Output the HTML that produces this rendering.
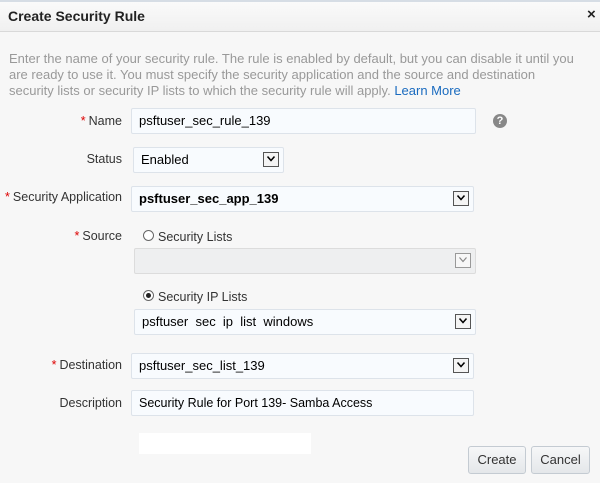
<!DOCTYPE html>
<html><head><style>
body{margin:0;width:600px;height:483px;background:#f7f7f7;font-family:"Liberation Sans",Arial,sans-serif;position:relative;overflow:hidden;color:#333}
.a{position:absolute}
.hdr{left:0;top:0;width:600px;height:32px;background:linear-gradient(#fafafa,#f0f0f0);border-top:2px solid #d6dde5;border-bottom:1px solid #d9d9d9;box-sizing:border-box}
.lbl{font-size:12.5px;color:#333;text-align:right;width:200px}
.req{color:#d00;margin-right:3px}
.in{background:#f8fbfe;border:1px solid #dde3ea;border-radius:2px;box-sizing:border-box;font-size:13px;color:#000;padding-left:7px;line-height:24px}
.dd{position:absolute;right:4px;top:4px;width:16px;height:15px;border:1px solid #555;background:#f4f4f4;box-sizing:border-box}
.dd svg{position:absolute;left:3px;top:3px}
.radio{width:11px;height:11px;border:1px solid #666;border-radius:50%;background:#fff;box-sizing:border-box}
.btn{border:1px solid #c4cbd2;border-radius:3px;background:linear-gradient(#f6f7f8,#e4e7ea);font-size:13px;text-align:center;line-height:26px;box-sizing:border-box;color:#333}
</style></head><body>
<div class="a hdr"></div>
<div class="a" style="left:8px;top:8px;font-size:14px;font-weight:bold;color:#222">Create Security Rule</div>
<div class="a" style="left:587px;top:6px;font-size:15px;font-weight:bold;color:#222">×</div>
<div class="a" style="left:9px;top:51px;width:572px;font-size:13px;line-height:16px;color:#999">Enter the name of your security rule. The rule is enabled by default, but you can disable it until you are ready to use it. You must specify the security application and the source and destination security lists or security IP lists to which the security rule will apply. <span style="color:#1a6bbf">Learn More</span></div>

<div class="a lbl" style="left:-78px;top:114px"><span class="req">*</span>Name</div>
<div class="a in" style="left:131px;top:108px;width:345px;height:26px">psftuser_sec_rule_139</div>
<div class="a" style="left:493px;top:114px;width:14px;height:14px;border-radius:50%;background:#888;color:#fff;font-size:11px;font-weight:bold;text-align:center;line-height:14px">?</div>

<div class="a lbl" style="left:-78px;top:152px">Status</div>
<div class="a in" style="left:133px;top:147px;width:151px;height:26px">Enabled<div class="dd"><svg width="8" height="6"><path d="M0.5 0.5L4 4.5L7.5 0.5" stroke="#000" stroke-width="1.5" fill="none"/></svg></div></div>

<div class="a lbl" style="left:-78px;top:190px"><span class="req">*</span>Security Application</div>
<div class="a in" style="left:131px;top:186px;width:343px;height:26px;font-weight:bold">psftuser_sec_app_139<div class="dd"><svg width="8" height="6"><path d="M0.5 0.5L4 4.5L7.5 0.5" stroke="#000" stroke-width="1.5" fill="none"/></svg></div></div>

<div class="a lbl" style="left:-78px;top:229px"><span class="req">*</span>Source</div>
<div class="a radio" style="left:143px;top:230px"></div>
<div class="a" style="left:158px;top:230px;font-size:12.5px">Security Lists</div>
<div class="a in" style="left:134px;top:248px;width:342px;height:26px;background:#eeeff0;border-color:#dcdcdc"><div class="dd" style="border-color:#999;background:#f7f7f7"><svg width="8" height="6"><path d="M0.5 0.5L4 4.5L7.5 0.5" stroke="#888" stroke-width="1.2" fill="none"/></svg></div></div>
<div class="a radio" style="left:143px;top:290px"><div style="position:absolute;left:2px;top:2px;width:5px;height:5px;border-radius:50%;background:#222"></div></div>
<div class="a" style="left:158px;top:290px;font-size:12.5px">Security IP Lists</div>
<div class="a in" style="left:134px;top:309px;width:342px;height:26px">psftuser&nbsp; sec&nbsp; ip&nbsp; list&nbsp; windows<div class="dd"><svg width="8" height="6"><path d="M0.5 0.5L4 4.5L7.5 0.5" stroke="#000" stroke-width="1.5" fill="none"/></svg></div></div>

<div class="a lbl" style="left:-78px;top:358px"><span class="req">*</span>Destination</div>
<div class="a in" style="left:131px;top:353px;width:343px;height:26px">psftuser_sec_list_139<div class="dd"><svg width="8" height="6"><path d="M0.5 0.5L4 4.5L7.5 0.5" stroke="#000" stroke-width="1.5" fill="none"/></svg></div></div>

<div class="a lbl" style="left:-78px;top:396px">Description</div>
<div class="a in" style="left:131px;top:390px;width:343px;height:26px;font-size:12.5px">Security Rule for Port 139- Samba Access</div>

<div class="a" style="left:139px;top:433px;width:172px;height:21px;background:#fff"></div>
<div class="a btn" style="left:468px;top:446px;width:58px;height:28px">Create</div>
<div class="a btn" style="left:531px;top:446px;width:59px;height:28px">Cancel</div>
</body></html>
